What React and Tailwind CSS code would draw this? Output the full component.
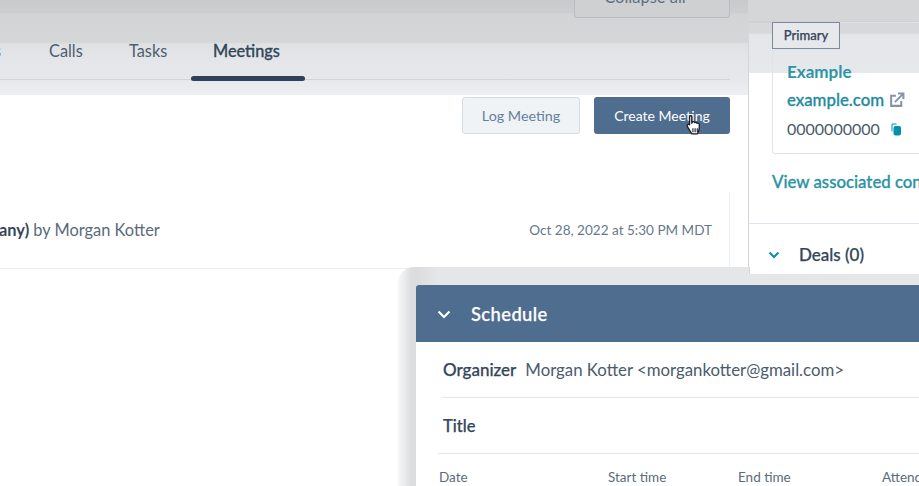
import React from "react";

const font = { fontFamily: '"Lato", "Noto Sans", sans-serif' };

function Tabs() {
  return (
    <div className="relative h-[95px] bg-[linear-gradient(180deg,#c9cacc_0,#cdced0_13px,#d3d4d6_14px,#d5d6d8_42px,#dfe1e3_44px,#e4e6e9_60px,#e5e7ea_78px,#edeff2_95px)]">
      <div className="flex justify-end pr-[18px]">
        <div className="-mt-[23px] flex h-[41px] w-[156px] items-center justify-center rounded-b-[3px] border border-t-0 border-[#b9bdc2] bg-[#cfd0d2] pr-[14px] text-[16.5px] text-[#5e6f80]">
          Collapse all
        </div>
      </div>
      <div className="mt-[24px] flex h-[19px] items-center text-[16.3px] text-[#4c5e70]">
        <span className="-ml-[6px] w-[55px]">s</span>
        <span className="w-[80px]">Calls</span>
        <span className="w-[84px]">Tasks</span>
        <span className="font-medium text-[#33475b] [-webkit-text-stroke:0.3px_#33475b]">Meetings</span>
      </div>
      <div className="relative mt-[18px] mr-[18px] h-[1px] bg-[#d2d5d8]">
        <div className="absolute left-[191px] top-[-3px] h-[5px] w-[114px] rounded-[3px] bg-[#2f4257]" />
      </div>
    </div>
  );
}

function Timeline() {
  return (
    <div className="bg-white pr-[18px]">
      <div className="flex justify-end gap-[14px] pt-[2px]">
        <div className="flex h-[37px] w-[118px] items-center justify-center rounded-[3px] border border-[#d5dbe3] bg-[#eff3f6] text-[14.3px] text-[#64809c]">
          Log Meeting
        </div>
        <div className="relative flex h-[37px] w-[136px] items-center justify-center rounded-[3px] bg-[#4e6d8f] text-[14px] text-white">
          Create Meeting
          <svg className="absolute left-[91px] top-[17px]" width="18" height="22" viewBox="0 0 16 20">
            <path d="M4.500 1.500c1 0 1.500.6 1.500 1.500v5.500l.5-1.200c.9-.6 2-.3 2.200.5.800-.5 1.900-.2 2.100.6.900-.4 1.900.1 2 1 .2 2.500 0 5-1 7.100l-.6 1.500H6l-4-6.500c-.5-.9-.2-1.700.5-2 .5-.2 1-.1 1.500.3V3c0-.9 0-1.500.5-1.500z" fill="#fff" stroke="#1d1d22" strokeWidth="1.200" strokeLinejoin="round" />
            <path d="M7 13v3.500M9 13v3.500M11 13v3.500" stroke="#1d1d22" strokeWidth="1" />
          </svg>
        </div>
      </div>
      <div className="mt-[58px] flex h-[77px] items-center justify-between border-r border-b border-[#eceff2] pr-[17px]">
        <div className="whitespace-nowrap text-[16.4px] text-[#5a6a7b]">
          <span className="-ml-[1px] font-bold text-[#33475b]">any)</span> by Morgan Kotter
        </div>
        <div className="whitespace-nowrap text-[13.55px] text-[#66778a]">Oct 28, 2022 at 5:30 PM MDT</div>
      </div>
    </div>
  );
}

function Sidebar() {
  return (
    <div className="flex w-[171px] shrink-0 flex-col border-l border-[#d3d5d8] bg-white">
      <div className="h-[73px] bg-[linear-gradient(180deg,#d5d6d8_0,#d5d6d8_21px,#c9cbce_22px,#d6d8da_23px,#d6d8da_33px,#e4e6e9_35px,#e6e8eb_73px)]" />
      <div className="-mt-[51px] pl-[23px]">
        <div className="h-[132px] w-[200px] rounded-[3px] border border-[#dfe3eb]">
          <div className="-mt-px -ml-px flex h-[27px] w-[68px] items-center justify-center border border-[#7c8a9b] bg-[#e6e8eb] text-[13px] font-medium text-[#33475b] [-webkit-text-stroke:0.25px_#33475b]">
            Primary
          </div>
          <div className="pl-[14px] pt-[12px]">
            <div className="h-[23px] text-[17px] font-bold leading-[22px] text-[#2d95a5]">Example</div>
            <div className="mt-[1px] flex h-[30px] items-center gap-[5px] whitespace-nowrap text-[16.8px] font-medium text-[#1f8ba0] [-webkit-text-stroke:0.3px_#1f8ba0]">
              example.com
              <svg width="16" height="16" viewBox="0 0 15 15" fill="none" stroke="#8794a8" strokeWidth="1.900">
                <path d="M11.500 8.500V13H2V3.500h4.500" />
                <path d="M5.500 9.500 13 2M8.500 1.500H13.500V6.500" />
              </svg>
            </div>
            <div className="mt-[1px] flex h-[26px] items-center gap-[10px] text-[16px] text-[#4a5b6d]">
              0000000000
              <svg width="12" height="13" viewBox="0 0 11 13">
                <path d="M1 1.500a1 1 0 0 1 1-1h4v1H2v7H1z" fill="#0091ae" />
                <rect x="3" y="3" width="7.500" height="9.500" rx="2" fill="#0091ae" />
              </svg>
            </div>
          </div>
        </div>
        <div className="mt-[15px] whitespace-nowrap text-[16.8px] font-medium text-[#2b93a6] [-webkit-text-stroke:0.3px_#2b93a6]">View associated contacts</div>
      </div>
      <div className="mt-[29px] flex h-[63px] items-center gap-[19px] border-t border-[#dfe3eb] pl-[19px] text-[17px] font-medium text-[#33475b] [-webkit-text-stroke:0.25px_#33475b]">
        <svg width="12" height="8" viewBox="0 0 12 8" fill="none" stroke="#0091ae" strokeWidth="2">
          <path d="M1.500 1.500 6 6l4.500-4.500" />
        </svg>
        Deals (0)
      </div>
    </div>
  );
}

function Schedule() {
  return (
    <div className="absolute left-[398px] top-[267px] w-[560px] rounded-tl-[16px] bg-[linear-gradient(90deg,#f6f7f8_0,#eaebed_7px,#dcdee0_13px,#dbdcde_18px,#e4e6e8_40px,#e4e6e8_100%)] pl-[18px] pt-[18px]">
      <div className="absolute left-[351px] top-0 h-[7px] w-[209px] border-l border-[#d3d5d8] bg-white" />
      <div className="rounded-tl-[3px] bg-white">
        <div className="flex h-[57px] items-center gap-[20px] rounded-tl-[3px] bg-[#4e6d8f] pl-[21px] pt-[2px] text-[18.4px] font-medium text-white">
          <svg width="14" height="9" viewBox="0 0 14 9" fill="none" stroke="#fff" strokeWidth="2.200">
            <path d="M1.500 1.500 7 7l5.500-5.500" />
          </svg>
          <span className="tracking-[0.4px] [-webkit-text-stroke:0.25px_#fff]">Schedule</span>
        </div>
        <div className="ml-[26px] flex h-[56px] items-center gap-[9px] border-b border-[#e3e6eb] pl-[1px] whitespace-nowrap text-[#33475b]">
          <span className="text-[17px] font-medium [-webkit-text-stroke:0.25px_#33475b]">Organizer</span>
          <span className="text-[16.8px] text-[#4a5b6d]">Morgan Kotter &lt;morgankotter@gmail.com&gt;</span>
        </div>
        <div className="ml-[22px] flex h-[56px] items-center border-b border-[#e3e6eb] pl-[5px] pt-[1px] text-[16.5px] font-medium text-[#33475b] [-webkit-text-stroke:0.25px_#33475b]">
          Title
        </div>
        <div className="ml-[23px] flex pt-[13px] text-[13.5px] text-[#5a6b7d]">
          <span className="w-[169px] shrink-0">Date</span>
          <span className="w-[130px] shrink-0">Start time</span>
          <span className="w-[144px] shrink-0">End time</span>
          <span className="whitespace-nowrap">Attendees</span>
        </div>
      </div>
    </div>
  );
}

export default function App() {
  return (
    <div style={font} className="relative flex h-[486px] w-[919px] overflow-hidden bg-white">
      <div className="w-[748px] shrink-0">
        <Tabs />
        <Timeline />
      </div>
      <Sidebar />
      <Schedule />
    </div>
  );
}
